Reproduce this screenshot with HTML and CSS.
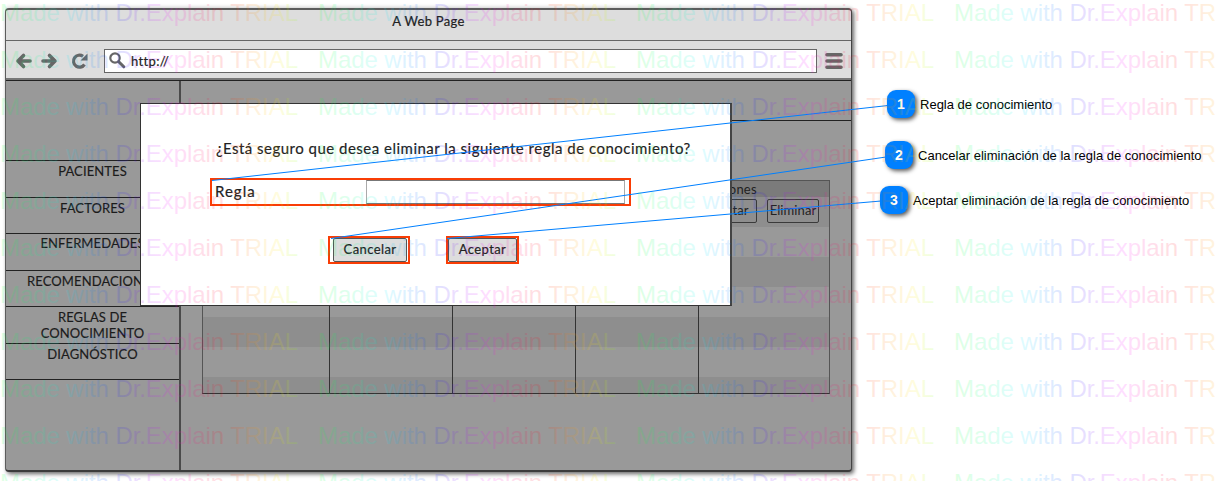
FILE: index.html
```
<!DOCTYPE html>
<html lang="es">
<head>
<meta charset="utf-8">
<title>A Web Page</title>
<link rel="stylesheet" href="styles.css">
</head>
<body>
<div class="canvas">
  <section class="window">
    <header class="titlebar"><span>A Web Page</span></header>
    <div class="toolbar">
      <svg class="nav" width="74" height="20" viewBox="0 0 74 20" fill="none" stroke="#666" stroke-width="3.600" stroke-linecap="round" stroke-linejoin="round">
        <path d="M4 10H16M9.500 4.500L4 10l5.500 5.500M29 10H41M35.500 4.500L41 10l-5.500 5.500"/>
        <path d="M70.500 13.500A6 6 0 1 1 69 5.300" stroke-width="3.200" stroke-linecap="butt"/>
        <path d="M73.500 2.500V9.500H66.500Z" fill="#666" stroke="none"/>
      </svg>
      <div class="address">
        <svg width="17" height="17" viewBox="0 0 17 17" fill="none" stroke="#666"><circle cx="6" cy="6" r="4.700" stroke-width="2.200"/><path d="M9.500 9.500l5.300 5.300" stroke-width="3" stroke-linecap="round"/></svg>
        <span>http://</span>
      </div>
      <svg class="burger" width="18" height="18" viewBox="0 0 18 18" stroke="#666" stroke-width="3.600" stroke-linecap="round"><path d="M2 2.700H16M2 9H16M2 15.300H16"/></svg>
    </div>
    <div class="body">
      <nav class="sidebar">
        <div class="item blank"></div>
        <div class="item">PACIENTES</div>
        <div class="item">FACTORES</div>
        <div class="item enf">ENFERMEDADES</div>
        <div class="item">RECOMENDACIONES</div>
        <div class="item two">REGLAS DE<br>CONOCIMIENTO</div>
        <div class="item">DIAGNÓSTICO</div>
      </nav>
      <main class="main">
        <div class="banner"></div>
        <div class="table">
          <div class="col"></div><div class="col"></div><div class="col"></div><div class="col"></div>
          <div class="col last">
            <div class="thead">Acciones</div>
            <div class="actions"><span class="action edit">Editar</span><span class="action del">Eliminar</span></div>
          </div>
        </div>
      </main>
    </div>
  </section>

  <section class="dialog">
    <p class="question">¿Está seguro que desea eliminar la siguiente regla de conocimiento?</p>
    <div class="field mark"><span class="name">Regla</span><span class="input"></span></div>
    <div class="buttons">
      <div class="mark cancel"><span class="btn">Cancelar</span></div>
      <div class="mark accept"><span class="btn">Aceptar</span></div>
    </div>
  </section>

  <svg class="overlay" width="1217" height="481" stroke="#0080ff" stroke-width="1">
    <path d="M212 180.500L888 105.500M331 238.500L886 157M447 238.500L881 201"/>
  </svg>

  <div class="note n1"><b class="pin">1</b><span>Regla de conocimiento</span></div>
  <div class="note n2"><b class="pin">2</b><span>Cancelar eliminación de la regla de conocimiento</span></div>
  <div class="note n3"><b class="pin">3</b><span>Aceptar eliminación de la regla de conocimiento</span></div>

  <svg class="overlay" id="watermark" width="1217" height="481">
    <defs>
      <linearGradient id="rainbow" gradientUnits="userSpaceOnUse" x1="2" y1="0" x2="298" y2="0">
        <stop offset="0" stop-color="#0f3"/><stop offset=".1" stop-color="#00ff7b"/><stop offset=".22" stop-color="#00eaff"/>
        <stop offset=".3" stop-color="#0083ff"/><stop offset=".4" stop-color="#1010ff"/><stop offset=".48" stop-color="#9500ff"/>
        <stop offset=".57" stop-color="#f0f"/><stop offset=".67" stop-color="#ff0060"/><stop offset=".75" stop-color="#f00"/>
        <stop offset=".84" stop-color="#ff8000"/><stop offset=".93" stop-color="#ffe600"/><stop offset="1" stop-color="#8f0"/>
      </linearGradient>
    </defs>
  </svg>
</div>
<script src="watermark.js"></script>
</body>
</html>
```
FILE: styles.css
```
body { margin: 0; background: #fff; }
.canvas { position: relative; width: 1217px; height: 481px; overflow: hidden; font-family: Lato, "Open Sans", sans-serif; font-size: 14px; color: #222; }

.window { position: absolute; left: 5px; top: 8px; width: 847px; height: 464px; box-sizing: border-box; border: 2px solid #5c5c5c; border-right-color: #444; border-bottom-color: #3c3c3c; border-left-width: 1px; border-right-width: 1px; border-radius: 4px; background: #999; box-shadow: 2px 2px 4px rgba(0,0,0,.6), 0 -3px 3px rgba(0,0,0,.05); display: flex; flex-direction: column; overflow: hidden; }
.titlebar { height: 30px; background: #ddd; border-bottom: 1px solid #666; text-align: center; font-size: 13px; line-height: 23px; }
.titlebar span { letter-spacing: .3px; -webkit-text-stroke: .2px #222; }
.toolbar { height: 37px; background: #ddd; border-bottom: 2px solid #777; display: flex; align-items: center; }
.nav { margin-left: 8px; margin-top: 2px; }
.address { box-sizing: border-box; width: 713px; height: 24px; margin-left: 16px; border: 1px solid #666; background: #fff; display: flex; align-items: center; padding-left: 4px; gap: 5px; margin-top: 2px; }
.address span { font-size: 13px; letter-spacing: .35px; -webkit-text-stroke: .2px #222; }
.burger { margin-left: 8px; margin-top: 2px; }

.body { flex: 1; display: flex; border-top: 1px solid #222; }
.sidebar { width: 173px; border-right: 2px solid #4a4a4a; text-align: center; font-size: 13px; line-height: 16px; color: #1b1b1b; letter-spacing: .1px; -webkit-text-stroke: .15px #1b1b1b; }
.item { box-sizing: border-box; height: 36.500px; border-bottom: 1.500px solid #222; padding-top: 2px; }
.item.blank { height: 80px; }
.item.enf { padding-top: 1px; }
.main { flex: 1; }
.banner { height: 39px; border-bottom: 1px solid #222; }
.table { box-sizing: border-box; width: 628px; height: 214px; margin: 59px 0 0 21px; border: 1px solid #555; border-bottom-color: #333; display: grid; grid-template-columns: 127px 123px 123px 123px 130px; background: linear-gradient(#7b7b7b 16px, transparent 16px), repeating-linear-gradient(#8e8e8e 0 30px, #999 30px 60px) 0 16px; }
.col { border-right: 1px solid #333; }
.col.last { border: 0; }
.thead { height: 16px; line-height: 16px; padding-left: 5px; letter-spacing: .2px; font-size: 13px; }
.actions { display: flex; padding-top: 2px; }
.action { box-sizing: border-box; height: 24px; border: 1px solid #3a3a3a; border-radius: 2px; font-size: 13px; letter-spacing: .1px; line-height: 21px; text-align: center; }
.action.edit { width: 52px; margin-left: 6px; padding-left: 1px; }
.action.del { width: 52px; margin-left: 10px; }

.dialog { position: absolute; left: 140px; top: 103px; width: 592px; height: 203px; box-sizing: border-box; border: 1px solid #333; border-right: 2px solid #444; background: #fff; display: flex; flex-direction: column; }
.question { margin: 34px 0 0 75px; font-size: 15px; line-height: 20px; white-space: nowrap; letter-spacing: .49px; -webkit-text-stroke: .15px #222; }
.mark { box-sizing: border-box; border: 2px solid #f93d05; height: 28px; }
.field { width: 421px; margin: 20px 0 0 69px; display: flex; align-items: center; padding-left: 3px; }
.name { width: 151px; font-size: 15px; line-height: 20px; padding-bottom: 2px; box-sizing: border-box; letter-spacing: 1px; -webkit-text-stroke: .2px #222; }
.input { box-sizing: border-box; width: 259px; height: 24px; border: 1px solid #aaa; border-top-color: #777; border-bottom-color: #777; }
.buttons { display: flex; margin: 30px 0 0 187px; gap: 36px; }
.cancel { width: 82px; padding-left: 3px; padding-right: 1px; }
.accept { width: 73px; }
.btn { display: block; box-sizing: border-box; height: 24px; border: 1px solid #555; border-radius: 2px; background: #ddd; text-align: center; font-size: 13px; line-height: 21px; letter-spacing: .4px; -webkit-text-stroke: .2px #222; }

.note { position: absolute; display: flex; align-items: center; gap: 5px; font: 13px "Liberation Sans", Arial, sans-serif; color: #000; white-space: nowrap; }
.note span { letter-spacing: .005px; padding-top: 1px; }
.n1 { left: 887px; top: 90px; }
.n2 { left: 885px; top: 141px; }
.n3 { left: 880px; top: 186px; }
.pin { width: 28px; height: 28px; border-radius: 9px; background: #0080ff; color: #fff; font-size: 14px; line-height: 28px; text-align: center; box-shadow: 2px 2px 4px rgba(0,0,0,.65); }
.overlay { position: absolute; left: 0; top: 0; pointer-events: none; }
.stamp { font: 24px "Liberation Sans", Arial, sans-serif; fill: url(#rainbow); fill-opacity: .13; stroke: none; }
```
FILE: watermark.js
```
// Tiles the trial watermark over the whole canvas.
const layer = document.getElementById('watermark');
for (let y = 21; y < 520; y += 47) {
  for (let x = 0; x < 1217; x += 318) {
    const t = document.createElementNS('http://www.w3.org/2000/svg', 'text');
    t.setAttribute('class', 'stamp');
    t.setAttribute('x', 0);
    t.setAttribute('y', y);
    t.setAttribute('textLength', 298);
    t.setAttribute('transform', `translate(${x} 0)`);
    t.textContent = 'Made with Dr.Explain TRIAL';
    layer.appendChild(t);
  }
}
```
